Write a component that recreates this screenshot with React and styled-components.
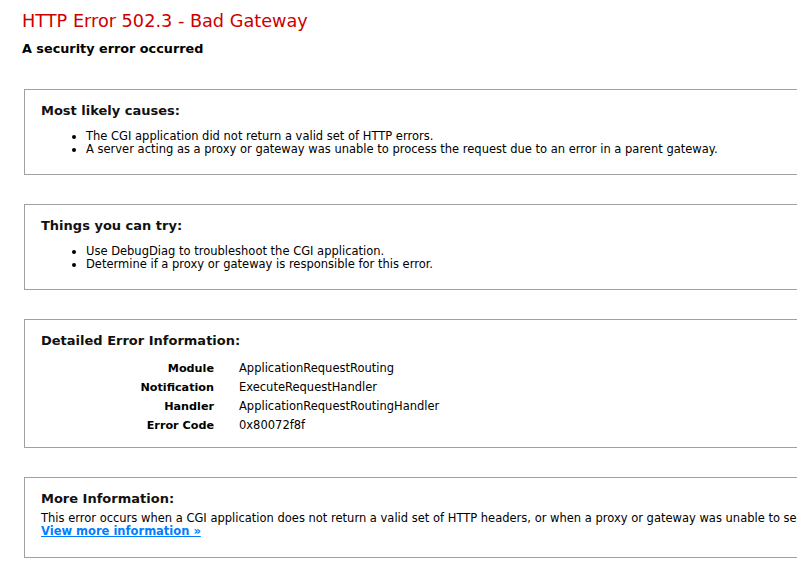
import React from 'react';
import styled, { createGlobalStyle } from 'styled-components';

const GlobalStyle = createGlobalStyle`
    html, body {
        margin: 0;
        padding: 0;
        background: #ffffff;
        overflow: hidden;
    }
    body {
        font-family: 'DejaVu Sans', Verdana, 'Liberation Sans', sans-serif;
        font-size: 11.5px;
        color: #000000;
    }
`;

const Page = styled.div`
    width: 1100px;
    padding: 10px 0 40px 22px;
`;

const Title = styled.h2`
    margin: 0;
    font-size: 17.7px;
    line-height: 22px;
    font-weight: normal;
    color: #cc0000;
`;

const Subtitle = styled.h3`
    margin: 9px 0 0 0;
    font-size: 12.8px;
    line-height: 16px;
    font-weight: bold;
    color: #000000;
`;

const Content = styled.div`
    display: flex;
    flex-direction: column;
    gap: 29px;
    margin: 32px 0 0 2px;
`;

const Box = styled.section`
    width: 1000px;
    border: 1px solid #a0a0a0;
    padding: 13px 16px ${(p) => p.$pb || 18}px 16px;
`;

const Heading = styled.h4`
    margin: 0;
    font-size: 13px;
    line-height: 16px;
    font-weight: bold;
    color: #111111;
`;

const List = styled.ul`
    margin: 11px 0 0 0;
    padding: 0 0 0 45px;
    list-style: disc;
    line-height: 13px;
`;

const Details = styled.dl`
    display: grid;
    grid-template-columns: 173px 1fr;
    column-gap: 25px;
    margin: 10px 0 0 0;
    line-height: 13px;
`;

const Label = styled.dt`
    padding: 3px 0;
    text-align: right;
    font-weight: bold;
    font-size: 11.2px;
`;

const Value = styled.dd`
    margin: 0;
    padding: 3px 0;
`;

const Para = styled.p`
    margin: 5px 0 0 0;
    line-height: 13px;
    white-space: nowrap;
`;

const MoreLink = styled.a`
    color: #007eff;
    font-weight: bold;
    text-decoration: underline;
`;

const details = [
    ['Module', 'ApplicationRequestRouting'],
    ['Notification', 'ExecuteRequestHandler'],
    ['Handler', 'ApplicationRequestRoutingHandler'],
    ['Error Code', '0x80072f8f'],
];

const App = () => {
    return (
        <>
            <GlobalStyle />
            <Page>
                <Title>HTTP Error 502.3 - Bad Gateway</Title>
                <Subtitle>A security error occurred</Subtitle>
                <Content>
                    <Box>
                        <Heading>Most likely causes:</Heading>
                        <List>
                            <li>The CGI application did not return a valid set of HTTP errors.</li>
                            <li>A server acting as a proxy or gateway was unable to process the request due to an error in a parent gateway.</li>
                        </List>
                    </Box>
                    <Box>
                        <Heading>Things you can try:</Heading>
                        <List>
                            <li>Use DebugDiag to troubleshoot the CGI application.</li>
                            <li>Determine if a proxy or gateway is responsible for this error.</li>
                        </List>
                    </Box>
                    <Box $pb={12}>
                        <Heading>Detailed Error Information:</Heading>
                        <Details>
                            {details.map(([k, v]) => (
                                <React.Fragment key={k}>
                                    <Label>{k}</Label>
                                    <Value>{v}</Value>
                                </React.Fragment>
                            ))}
                        </Details>
                    </Box>
                    <Box $pb={19}>
                        <Heading>More Information:</Heading>
                        <Para>
                            This error occurs when a CGI application does not return a valid set of HTTP headers, or when a proxy or gateway was unable to send the request to a parent gateway.
                            <br />
                            <MoreLink href="#">View more information &raquo;</MoreLink>
                        </Para>
                    </Box>
                </Content>
            </Page>
        </>
    );
};

export default App;
